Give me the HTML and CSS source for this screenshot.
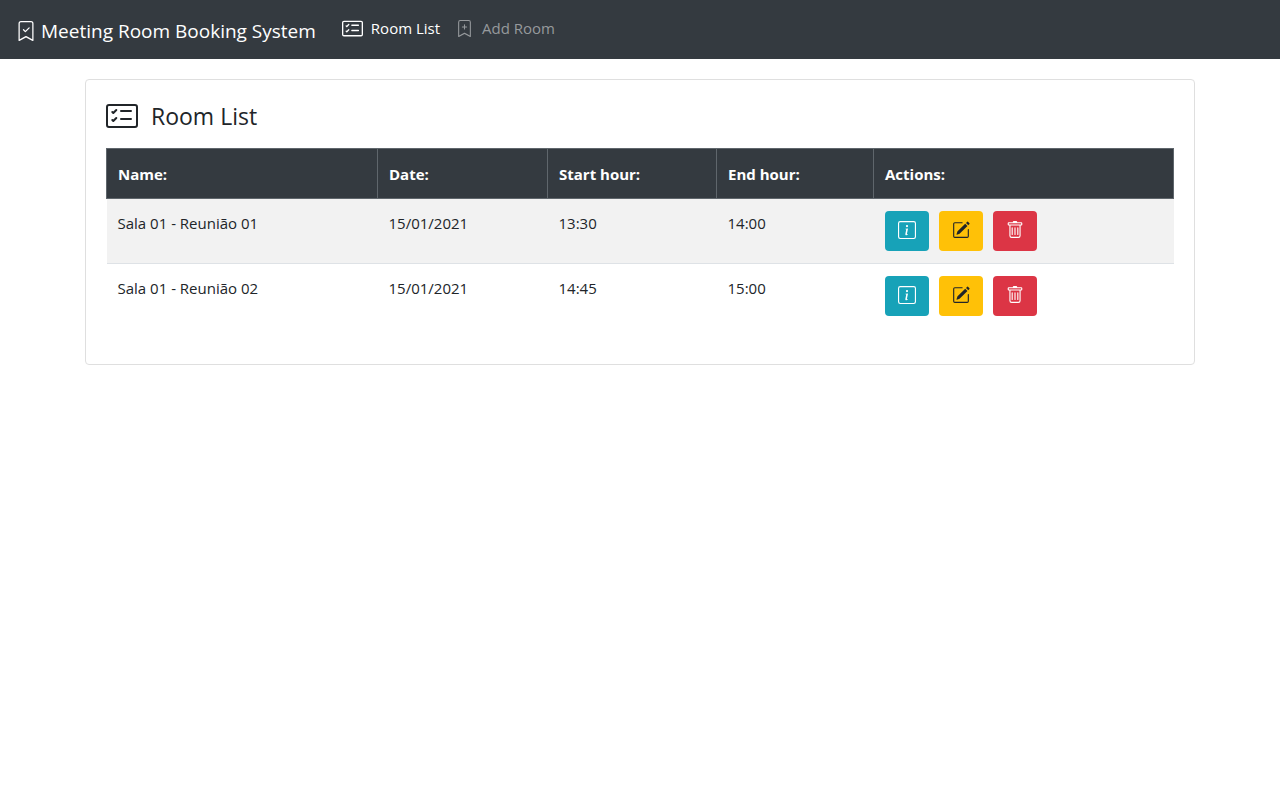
FILE: index.html
```html
<!DOCTYPE html>
<html lang="en">
<head>
<meta charset="utf-8">
<meta name="viewport" content="width=device-width, initial-scale=1">
<title>Meeting Room Booking System</title>
<link rel="stylesheet" href="styles.css">
</head>
<body>
<svg class="sprite" aria-hidden="true">
  <symbol id="bookmark" viewBox="0 0 16 16"><path d="M2 2a2 2 0 0 1 2-2h8a2 2 0 0 1 2 2v13.5a.5.5 0 0 1-.777.416L8 13.101l-5.223 2.815A.5.5 0 0 1 2 15.5V2zm2-1a1 1 0 0 0-1 1v12.566l4.723-2.482a.5.5 0 0 1 .554 0L13 14.566V2a1 1 0 0 0-1-1H4z"/></symbol>
  <symbol id="checklist" viewBox="0 0 16 16"><path d="M14.5 3a.5.5 0 0 1 .5.5v9a.5.5 0 0 1-.5.5h-13a.5.5 0 0 1-.5-.5v-9a.5.5 0 0 1 .5-.5h13zm-13-1A1.5 1.5 0 0 0 0 3.5v9A1.5 1.5 0 0 0 1.5 14h13a1.5 1.5 0 0 0 1.5-1.5v-9A1.5 1.5 0 0 0 14.5 2h-13z"/><path d="M7 5.5a.5.5 0 0 1 .5-.5h5a.5.5 0 0 1 0 1h-5a.5.5 0 0 1-.5-.5zm-1.496-.854a.5.5 0 0 1 0 .708l-1.5 1.5a.5.5 0 0 1-.708 0l-.5-.5a.5.5 0 1 1 .708-.708l.146.147 1.146-1.147a.5.5 0 0 1 .708 0zM7 9.5a.5.5 0 0 1 .5-.5h5a.5.5 0 0 1 0 1h-5a.5.5 0 0 1-.5-.5zm-1.496-.854a.5.5 0 0 1 0 .708l-1.5 1.5a.5.5 0 0 1-.708 0l-.5-.5a.5.5 0 0 1 .708-.708l.146.147 1.146-1.147a.5.5 0 0 1 .708 0z"/></symbol>
  <symbol id="info" viewBox="0 0 16 16"><path d="M14 1a1 1 0 0 1 1 1v12a1 1 0 0 1-1 1H2a1 1 0 0 1-1-1V2a1 1 0 0 1 1-1h12zM2 0a2 2 0 0 0-2 2v12a2 2 0 0 0 2 2h12a2 2 0 0 0 2-2V2a2 2 0 0 0-2-2H2z"/><path d="m8.93 6.588-2.29.287-.082.38.45.083c.294.07.352.176.288.469l-.738 3.468c-.194.897.105 1.319.808 1.319.545 0 1.178-.252 1.465-.598l.088-.416c-.2.176-.492.246-.686.246-.275 0-.375-.193-.304-.533L8.93 6.588zM9 4.5a1 1 0 1 1-2 0 1 1 0 0 1 2 0z"/></symbol>
  <symbol id="edit" viewBox="0 0 16 16"><path d="M15.502 1.94a.5.5 0 0 1 0 .706L14.459 3.69l-2-2L13.502.646a.5.5 0 0 1 .707 0l1.293 1.293zm-1.75 2.456-2-2L4.939 9.21a.5.5 0 0 0-.121.196l-.805 2.414a.25.25 0 0 0 .316.316l2.414-.805a.5.5 0 0 0 .196-.12l6.813-6.814z"/><path d="M1 13.5A1.5 1.5 0 0 0 2.5 15h11a1.5 1.5 0 0 0 1.5-1.5v-6a.5.5 0 0 0-1 0v6a.5.5 0 0 1-.5.5h-11a.5.5 0 0 1-.5-.5v-11a.5.5 0 0 1 .5-.5H9a.5.5 0 0 0 0-1H2.5A1.5 1.5 0 0 0 1 2.500v11z"/></symbol>
  <symbol id="trash" viewBox="0 0 16 16"><path d="M5.5 5.5A.5.5 0 0 1 6 6v6a.5.5 0 0 1-1 0V6a.5.5 0 0 1 .5-.5zm2.500 0a.5.5 0 0 1 .5.5v6a.5.5 0 0 1-1 0V6a.5.5 0 0 1 .5-.5zm3 .5a.5.5 0 0 0-1 0v6a.5.5 0 0 0 1 0V6z"/><path fill-rule="evenodd" d="M14.5 3a1 1 0 0 1-1 1H13v9a2 2 0 0 1-2 2H5a2 2 0 0 1-2-2V4h-.5a1 1 0 0 1-1-1V2a1 1 0 0 1 1-1H6a1 1 0 0 1 1-1h2a1 1 0 0 1 1 1h3.500a1 1 0 0 1 1 1v1zM4.118 4 4 4.059V13a1 1 0 0 0 1 1h6a1 1 0 0 0 1-1V4.059L11.882 4H4.118zM2.500 3V2h11v1h-11z"/></symbol>
</svg>

<header>
  <nav class="navbar">
    <a class="brand" href="#">
      <svg class="brand-icon" viewBox="0 0 16 16" aria-hidden="true"><use href="#bookmark"/><path d="M10.854 5.146a.5.5 0 0 1 0 .708l-3 3a.5.5 0 0 1-.708 0l-1.500-1.500a.5.5 0 1 1 .708-.708L7.500 7.793l2.646-2.647a.5.5 0 0 1 .708 0z"/></svg>
      <span>Meeting Room Booking System</span>
    </a>
    <a class="nav-link active" href="#"><svg class="list-icon" aria-hidden="true"><use href="#checklist"/></svg><span>Room List</span></a>
    <a class="nav-link" href="#"><svg class="add-icon" viewBox="0 0 16 16" aria-hidden="true"><use href="#bookmark"/><path d="M8 4a.5.5 0 0 1 .5.5V6H10a.5.5 0 0 1 0 1H8.500v1.500a.5.5 0 0 1-1 0V7H6a.5.5 0 0 1 0-1h1.500V4.500A.5.5 0 0 1 8 4z"/></svg><span>Add Room</span></a>
  </nav>
</header>

<main class="container">
  <section class="card">
    <h1 class="title"><svg class="title-icon" aria-hidden="true"><use href="#checklist"/></svg><span>Room List</span></h1>
    <table class="rooms">
      <colgroup><col class="col-name"><col class="col-date"><col class="col-start"><col class="col-end"><col></colgroup>
      <thead>
        <tr><th scope="col">Name:</th><th scope="col">Date:</th><th scope="col">Start hour:</th><th scope="col">End hour:</th><th scope="col">Actions:</th></tr>
      </thead>
      <tbody>
        <tr>
          <td>Sala 01 - Reunião 01</td><td>15/01/2021</td><td>13:30</td><td>14:00</td>
          <td><div class="actions">
            <button class="btn btn-info" type="button" aria-label="Details"><svg><use href="#info"/></svg></button>
            <button class="btn btn-edit" type="button" aria-label="Edit"><svg><use href="#edit"/></svg></button>
            <button class="btn btn-delete" type="button" aria-label="Delete"><svg><use href="#trash"/></svg></button>
          </div></td>
        </tr>
        <tr>
          <td>Sala 01 - Reunião 02</td><td>15/01/2021</td><td>14:45</td><td>15:00</td>
          <td><div class="actions">
            <button class="btn btn-info" type="button" aria-label="Details"><svg><use href="#info"/></svg></button>
            <button class="btn btn-edit" type="button" aria-label="Edit"><svg><use href="#edit"/></svg></button>
            <button class="btn btn-delete" type="button" aria-label="Delete"><svg><use href="#trash"/></svg></button>
          </div></td>
        </tr>
      </tbody>
    </table>
  </section>
</main>
</body>
</html>
```
FILE: styles.css
```css
* { box-sizing: border-box; }

body {
  margin: 0;
  background: #fff;
  color: #212529;
  font-family: "Segoe UI", "Open Sans", "Noto Sans", sans-serif;
  font-size: 15px;
  line-height: 24px;
}

svg { fill: currentColor; flex: none; }
.sprite { display: none; }

.navbar {
  display: flex;
  align-items: flex-start;
  padding: 16px 16px 13px;
  background: #343a40;
}

.brand {
  display: flex;
  align-items: center;
  gap: 5px;
  margin-right: 26px;
  color: #fff;
  font-size: 19px;
  line-height: 30px;
  text-decoration: none;
}

.brand-icon { width: 20px; height: 20px; }

.nav-link {
  display: flex;
  align-items: center;
  margin-right: 16px;
  color: #96999c;
  text-decoration: none;
}

.nav-link.active { color: #fff; }
.list-icon { width: 21px; height: 21px; margin-right: 8px; }
.add-icon { width: 17px; height: 17px; margin-right: 9px; }

.container {
  max-width: 1140px;
  margin: 20px auto;
  padding: 0 15px;
}

.card {
  padding: 20px 20px 36px;
  border: 1px solid #dfdfdf;
  border-radius: 4px;
}

.title {
  display: flex;
  align-items: center;
  gap: 13px;
  margin: 0 0 16px;
  font-size: 23px;
  font-weight: 500;
  line-height: 32px;
}

.title-icon { width: 32px; height: 32px; }

.rooms {
  width: 100%;
  border-collapse: collapse;
  table-layout: fixed;
}

.col-name { width: 271px; }
.col-date { width: 170px; }
.col-start { width: 169px; }
.col-end { width: 157px; }

th, td { padding: 12px 11px; text-align: left; vertical-align: top; }

th {
  padding: 13px 11px 12px;
  background: #343a40;
  border: 1px solid #5f666c;
  color: #fff;
  font-weight: 700;
}

td { border-top: 1px solid #dee2e6; }
tbody tr:nth-child(odd) { background: #f2f2f2; }

.actions { display: flex; gap: 10px; }

.btn {
  display: flex;
  align-items: flex-start;
  justify-content: center;
  width: 44px;
  height: 40px;
  padding: 10px 0;
  border: 0;
  border-radius: 4px;
  color: #fff;
}

.btn svg { width: 18px; height: 18px; }
.btn-info { background: #17a2b8; }
.btn-edit { background: #ffc107; color: #212529; }
.btn-delete { background: #dc3545; }
```
